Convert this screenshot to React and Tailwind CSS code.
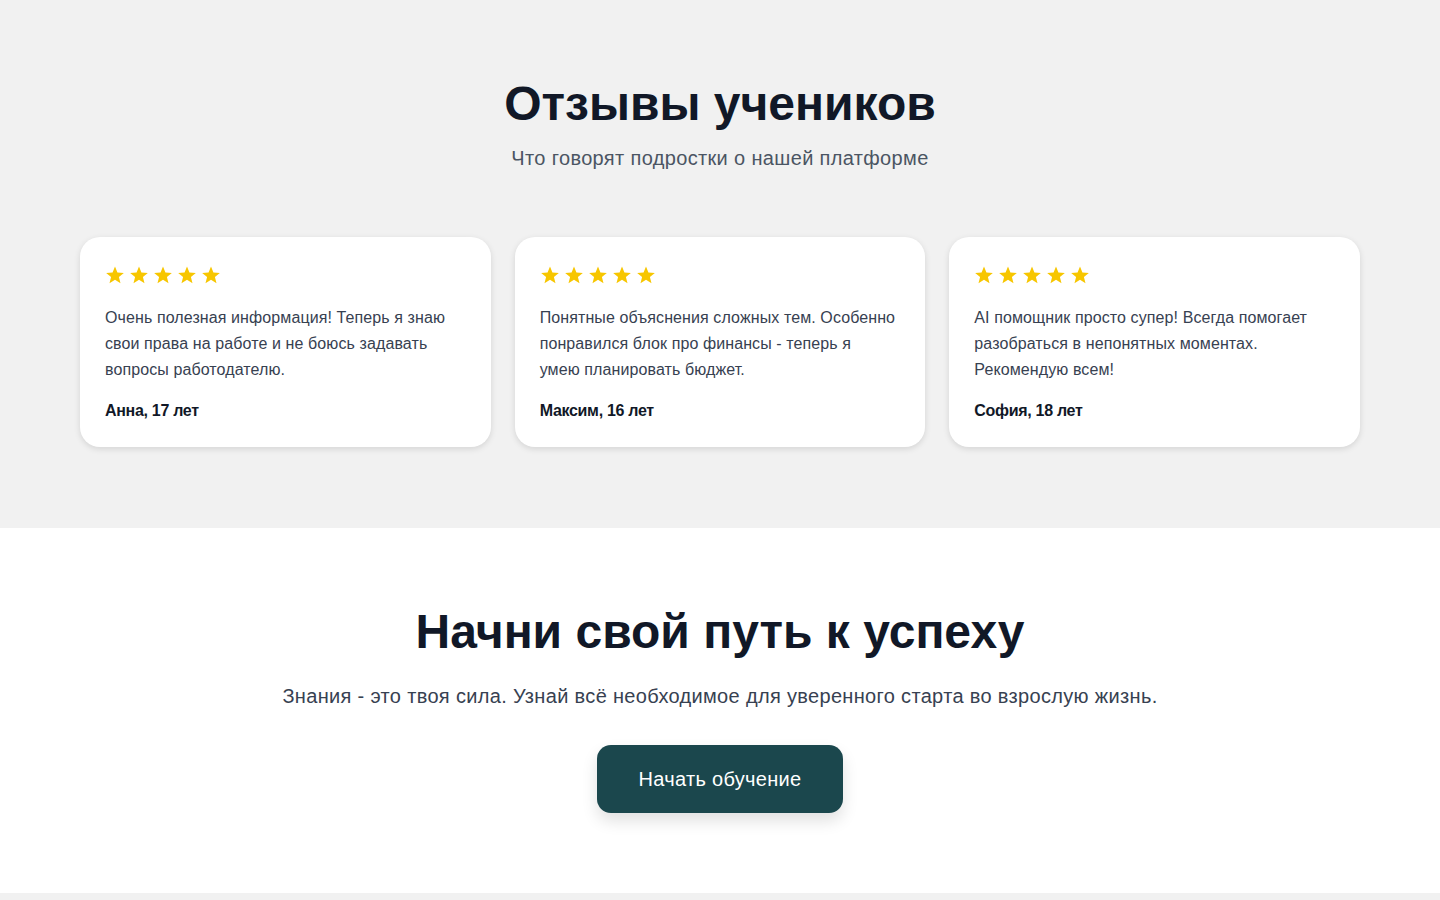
import React from "react";

const reviews = [
  {
    text: ["Очень полезная информация! Теперь я знаю свои права на работе и не боюсь задавать вопросы работодателю."],
    name: "Анна, 17 лет",
  },
  {
    text: ["Понятные объяснения сложных тем. Особенно понравился блок про финансы - теперь я", "умею планировать бюджет."],
    name: "Максим, 16 лет",
  },
  {
    text: ["AI помощник просто супер! Всегда помогает разобраться в непонятных моментах. Рекомендую всем!"],
    name: "София, 18 лет",
  },
];

function Star() {
  return (
    <svg width="20" height="20" viewBox="0 0 24 24" className="text-[#f7c600]">
      <path
        fill="currentColor"
        d="M12 1.8l2.9 7.2 7.7.5-5.9 5 1.9 7.5L12 17.8 5.4 22l1.9-7.5-5.9-5 7.7-.5z"
      />
    </svg>
  );
}

export default function App() {
  return (
    <div className="min-h-screen bg-white font-['Liberation_Sans',Arial,sans-serif]">
      <section className="bg-[#f1f1f1] pt-20 pb-[81px]">
        <div className="mx-auto max-w-7xl">
          <h2 className="text-center text-5xl font-bold leading-[48px] text-[#111827]">Отзывы учеников</h2>
          <p className="mt-4 text-center text-xl leading-7 tracking-[0.35px] text-[#4b5563]">Что говорят подростки о нашей платформе</p>
          <div className="mt-[65px] grid grid-cols-3 gap-6">
            {reviews.map((r) => (
              <div key={r.name} className="rounded-[20px] bg-white p-6 shadow-[0_2px_6px_rgba(0,0,0,0.12)]">
                <div className="flex h-7 items-center gap-1 pl-px">
                  <Star />
                  <Star />
                  <Star />
                  <Star />
                  <Star />
                </div>
                <p className="mt-4 pl-px text-base leading-[26px] tracking-[0.1px] text-[#374151]">
                  {r.text.map((t, i) => (
                    <React.Fragment key={i}>
                      {i > 0 && <br />}
                      {t}
                    </React.Fragment>
                  ))}
                </p>
                <p className="mt-4 pl-px text-base font-bold leading-6 tracking-[-0.3px] text-[#111827]">{r.name}</p>
              </div>
            ))}
          </div>
        </div>
      </section>
      <section className="bg-white py-20 text-center">
        <h2 className="text-5xl font-bold leading-[48px] text-[#111827]">Начни свой путь к успеху</h2>
        <p className="mt-[26px] text-xl leading-7 tracking-[0.33px] text-[#374151]">
          Знания - это твоя сила. Узнай всё необходимое для уверенного старта во взрослую жизнь.
        </p>
        <button className="mt-[35px] rounded-[14px] bg-[#1b474d] px-[42px] py-5 text-xl leading-7 tracking-[0.3px] text-white shadow-[0_8px_16px_rgba(0,0,0,0.12)]">
          Начать обучение
        </button>
      </section>
      <div className="h-2 bg-[#f1f1f1]" />
    </div>
  );
}
